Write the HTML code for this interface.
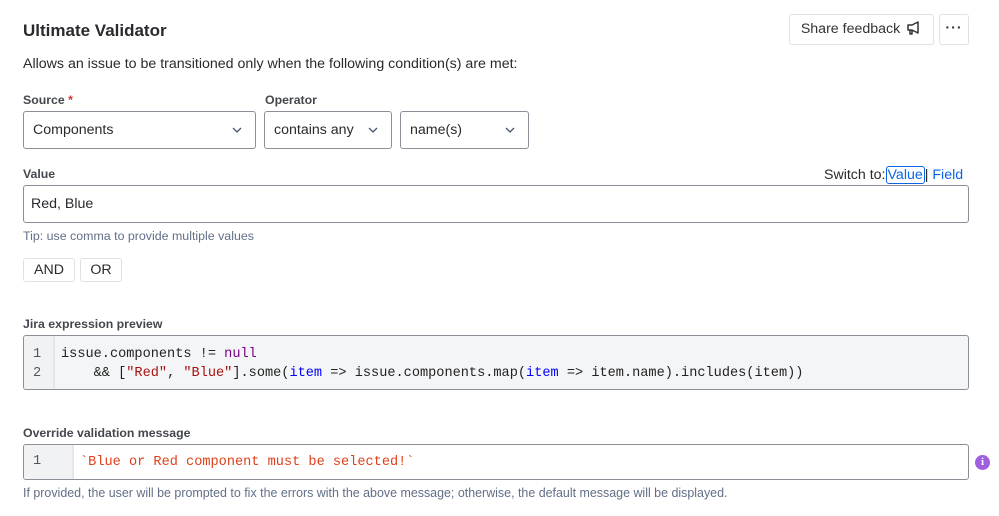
<!DOCTYPE html>
<html><head><meta charset="utf-8"><style>
*{box-sizing:border-box;margin:0;padding:0}
body{width:999px;height:516px;background:#fff;font-family:"Liberation Sans",sans-serif;color:#292a2e;position:relative;overflow:hidden}
.a{position:absolute}
.lbl{font-size:12.3px;font-weight:bold;color:#44474d}
.sel{border:1px solid #8c8f97;border-radius:3px;height:38px;font-size:14.2px;color:#292a2e;padding:0 0 0 9px;line-height:36px}
.chev{position:absolute;right:12px;top:14px;width:12px;height:8px}
.btn{border:1px solid #dfe1e6;border-radius:3px;font-size:14.2px;background:#fff;text-align:center}
.code{border:1px solid #8c8f97;border-radius:3px;background:#f4f5f7;font-family:"Liberation Mono",monospace;font-size:13.6px;overflow:hidden}
.gut{position:absolute;left:0;top:0;bottom:0;background:#f1f2f4;border-right:2px solid #e6e7ea;color:#555;padding-left:9px}
</style></head><body>
<div class="a" style="left:23px;top:21px;font-size:17px;font-weight:bold;color:#292a2e">Ultimate Validator</div>
<div class="a btn" style="left:789px;top:14px;width:145px;height:31px;line-height:29px;color:#333">Share feedback
<svg width="16" height="14" viewBox="0 0 16 14" style="vertical-align:-2px;margin-left:2px"><path d="M2 4h4l6-3v11l-6-3H2z M4 9v4h2V9" fill="none" stroke="#333" stroke-width="1.5" stroke-linejoin="round"/></svg></div>
<div class="a btn" style="left:939px;top:14px;width:30px;height:31px;line-height:26px;font-weight:bold;color:#333;letter-spacing:1px">···</div>
<div class="a" style="left:23px;top:56px;font-size:14.2px">Allows an issue to be transitioned only when the following condition(s) are met:</div>

<div class="a lbl" style="left:23px;top:93px">Source<span style="color:#c9372c"> *</span></div>
<div class="a lbl" style="left:265px;top:93px">Operator</div>
<div class="a sel" style="left:23px;top:111px;width:233px">Components<svg class="chev" viewBox="0 0 12 8"><path d="M2 2l4 4 4-4" fill="none" stroke="#44546f" stroke-width="1.3"/></svg></div>
<div class="a sel" style="left:264px;top:111px;width:128px">contains any<svg class="chev" viewBox="0 0 12 8"><path d="M2 2l4 4 4-4" fill="none" stroke="#44546f" stroke-width="1.3"/></svg></div>
<div class="a sel" style="left:400px;top:111px;width:129px">name(s)<svg class="chev" viewBox="0 0 12 8"><path d="M2 2l4 4 4-4" fill="none" stroke="#44546f" stroke-width="1.3"/></svg></div>

<div class="a lbl" style="left:23px;top:167px">Value</div>
<div class="a" style="left:824px;top:167px;font-size:14.2px">Switch to:<span style="color:#0c66e4;border:1px solid #0c66e4;border-radius:3px;padding:0 1px">Value</span><span>| </span><span style="color:#0c66e4">Field</span></div>
<div class="a sel" style="left:23px;top:185px;width:946px;padding-left:7px">Red, Blue</div>
<div class="a" style="left:23px;top:229px;font-size:12.4px;color:#626f86">Tip: use comma to provide multiple values</div>
<div class="a btn" style="left:23px;top:258px;width:52px;height:24px;line-height:22px">AND</div>
<div class="a btn" style="left:80px;top:258px;width:42px;height:24px;line-height:22px">OR</div>

<div class="a lbl" style="left:23px;top:317px">Jira expression preview</div>
<div class="a code" style="left:23px;top:335px;width:946px;height:55px">
<div class="gut" style="width:31px;padding-top:9px;line-height:19px">1<br>2</div>
<div class="a" style="left:37px;top:9px;line-height:19px;white-space:pre;color:#222">issue.components != <span style="color:#770088">null</span>
    &amp;&amp; [<span style="color:#a11">"Red"</span>, <span style="color:#a11">"Blue"</span>].some(<span style="color:#0000ff">item</span> =&gt; issue.components.map(<span style="color:#0000ff">item</span> =&gt; item.name).includes(item))</div>
</div>

<div class="a lbl" style="left:23px;top:426px">Override validation message</div>
<div class="a code" style="left:23px;top:444px;width:946px;height:36px;background:#fff">
<div class="gut" style="width:50px;line-height:34px">1</div>
<div class="a" style="left:56px;top:1px;line-height:34px;white-space:pre;color:#e0401a">`Blue or Red component must be selected!`</div>
</div>
<div class="a" style="left:975px;top:455px;width:15px;height:15px;border-radius:50%;background:#9f5fe0;color:#fff;font-size:11px;font-weight:bold;text-align:center;line-height:15px;font-family:'Liberation Serif',serif">i</div>
<div class="a" style="left:23px;top:486px;font-size:12.45px;color:#626f86">If provided, the user will be prompted to fix the errors with the above message; otherwise, the default message will be displayed.</div>
</body></html>
